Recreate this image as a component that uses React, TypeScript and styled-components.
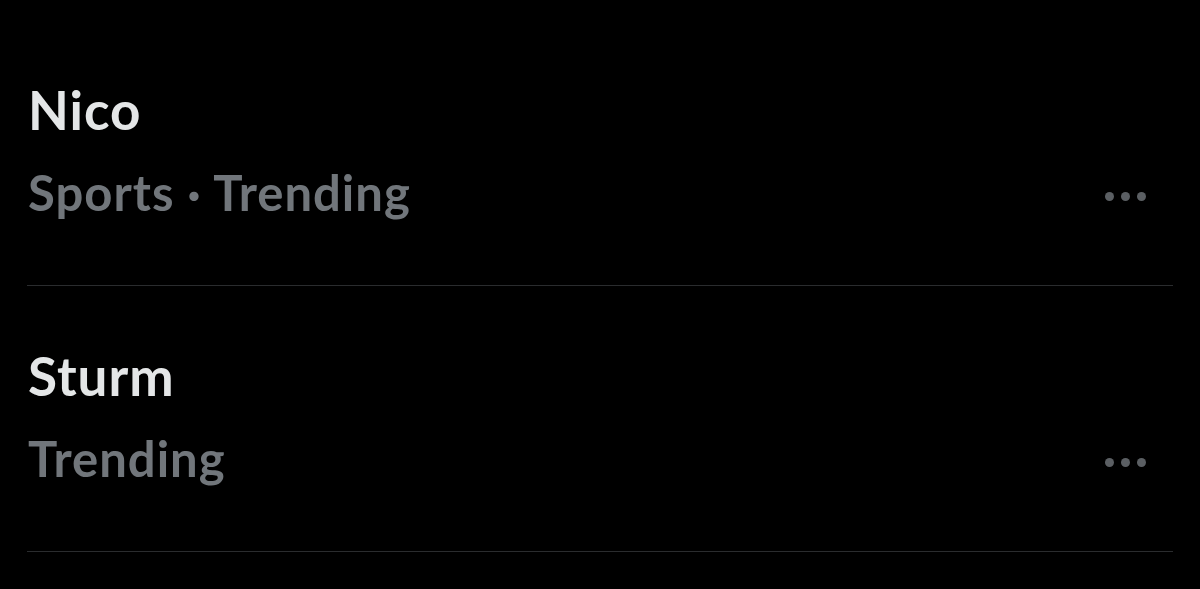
import styled, { createGlobalStyle } from 'styled-components';

const GlobalStyle = createGlobalStyle`
  html, body {
    margin: 0;
    padding: 0;
    background: #000;
  }
  body {
    font-family: Lato, "Noto Sans", sans-serif;
  }
`;

const List = styled.section`
  display: flex;
  flex-direction: column;
  padding: 72px 27px 0 27px;
`;

const Item = styled.article`
  display: flex;
  align-items: flex-start;
  justify-content: space-between;
  border-bottom: 1.5px solid #2a2c2e;
  padding: 0 27px 49px 1px;
  & + & {
    padding-top: 52px;
  }
`;

const Texts = styled.div`
  display: flex;
  flex-direction: column;
`;

const Title = styled.span`
  color: #e4e6e7;
  font-size: 53px;
  font-weight: 700;
  line-height: 76px;
  letter-spacing: 1px;
`;

const Meta = styled.span`
  color: #71767b;
  font-size: 49px;
  font-weight: 700;
  line-height: 88px;
  letter-spacing: 1px;
`;

const More = styled.button`
  display: flex;
  gap: 7px;
  padding: 0;
  margin-top: 120px;
  background: none;
  border: none;
  cursor: pointer;
`;

const Dot = styled.span`
  width: 9px;
  height: 9px;
  border-radius: 50%;
  background: #5b5f63;
`;

type TrendProps = {
  name: string,
  meta: string,
};

const Trend = ({ name, meta }: TrendProps) => (
  <Item>
    <Texts>
      <Title>{name}</Title>
      <Meta>{meta}</Meta>
    </Texts>
    <More aria-label="More">
      <Dot />
      <Dot />
      <Dot />
    </More>
  </Item>
);

const trends = [
  { name: 'Nico', meta: 'Sports · Trending' },
  { name: 'Sturm', meta: 'Trending' },
];

export default function App() {
  return (
    <>
      <GlobalStyle />
      <List>
        {trends.map((t) => (
          <Trend key={t.name} name={t.name} meta={t.meta} />
        ))}
      </List>
    </>
  );
}
